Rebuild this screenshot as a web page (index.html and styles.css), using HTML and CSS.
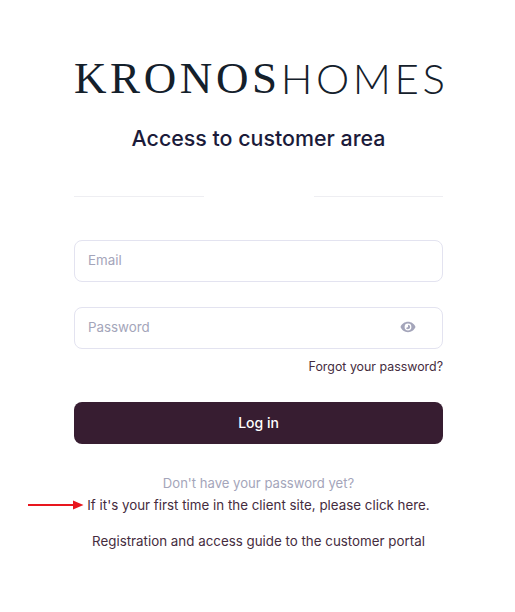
FILE: index.html
```html
<!DOCTYPE html>
<html lang="en">
  <head>
    <meta charset="UTF-8" />
    <meta name="viewport" content="width=device-width, initial-scale=1.0" />
    <title>Access to customer area</title>
    <link rel="stylesheet" href="styles.css">
  </head>
  <body>
    <div class="login-box">
      <!-- Logo -->
      <div class="logo"><span class="logo-serif">KRONOS</span><span class="logo-thin">HOMES</span></div>
      <h1 class="title">Access to customer area</h1>

      <div class="divider">
        <span class="divider-line"></span>
        <span class="divider-line"></span>
      </div>

      <!-- Form -->
      <div class="field">Email</div>
      <div class="field field-password">
        Password
        <svg class="eye" width="16" height="12" viewBox="0 0 16 12">
          <path fill-rule="evenodd" d="M8 .8C4.600.8 1.700 3 .5 6c1.200 3 4.100 5.200 7.500 5.200s6.300-2.200 7.500-5.200C14.300 3 11.400.8 8 .8zM8 2.600a3.400 3.400 0 1 1 0 6.800 3.400 3.400 0 0 1 0-6.800z" fill="#a4a5ba"/>
          <path d="M8 3.800a2.200 2.200 0 1 1-2 3.100L8 6z" fill="#a4a5ba"/>
        </svg>
      </div>
      <a class="forgot" href="#">Forgot your password?</a>
      <button class="login-btn">Log in</button>

      <!-- Links -->
      <p class="no-password">Don't have your password yet?</p>
      <p class="first-time">
        <svg class="arrow" width="56" height="10" viewBox="0 0 56 10">
          <path d="M0 4.100h46v1.800H0z" fill="#e8161e"/>
          <path d="M45 .5L55.500 5 45 9.500z" fill="#e8161e"/>
        </svg>
        If it's your first time in the client site, please click here.
      </p>
      <p class="guide">Registration and access guide to the customer portal</p>
    </div>
  </body>
</html>
```

FILE: styles.css
```css
* {
  margin: 0;
  padding: 0;
  box-sizing: border-box;
}

body {
  background: #fff;
  font-family: Inter, Arial, sans-serif;
  font-size: 13.35px;
  color: #452c3e;
}

.login-box {
  width: 369px;
  margin-left: 74px;
  padding-top: 58px;
}

/* Logo */
.logo {
  display: flex;
  justify-content: space-between;
  height: 40px;
  line-height: 40px;
  color: #14202b;
  white-space: nowrap;
}

.logo-serif {
  font-family: "Liberation Serif", serif;
  font-size: 45px;
  letter-spacing: 3.6px;
}

.logo-thin {
  margin-right: -4px;
  font-family: Lato, sans-serif;
  font-size: 42px;
  font-weight: 300;
  letter-spacing: 3.6px;
}

.title {
  margin-top: 28px;
  font-size: 21.4px;
  line-height: 24px;
  font-weight: 500;
  text-align: center;
  color: #1b1b3a;
}

.divider {
  display: flex;
  justify-content: space-between;
  margin-top: 46px;
}

.divider-line {
  width: 130px;
  height: 1px;
  background: #eeeef2;
}

.divider-line + .divider-line {
  width: 129px;
}

/* Form */
.field {
  display: flex;
  align-items: center;
  justify-content: space-between;
  height: 42px;
  margin-top: 43px;
  padding: 0 13px 2px;
  border: 1px solid #e3e3f0;
  border-radius: 8px;
  color: #a4a5ba;
}

.field-password {
  margin-top: 25px;
}

.eye {
  margin-right: 13px;
}

.forgot {
  display: block;
  margin-top: 10px;
  font-size: 12.4px;
  line-height: 16px;
  text-align: right;
  color: #452c3e;
  text-decoration: none;
}

.login-btn {
  display: block;
  width: 100%;
  height: 42px;
  margin-top: 27px;
  padding-bottom: 2px;
  background: #371d31;
  border: none;
  border-radius: 8px;
  font-family: inherit;
  font-size: 14px;
  font-weight: 500;
  color: #fff;
}

/* Links */
.no-password,
.first-time,
.guide {
  line-height: 22px;
  text-align: center;
}

.no-password {
  margin-top: 28px;
  font-size: 13.1px;
  color: #a4a5ba;
}

.first-time {
  position: relative;
}

.arrow {
  position: absolute;
  left: -46px;
  top: 6px;
}

.guide {
  margin-top: 14px;
}
```
